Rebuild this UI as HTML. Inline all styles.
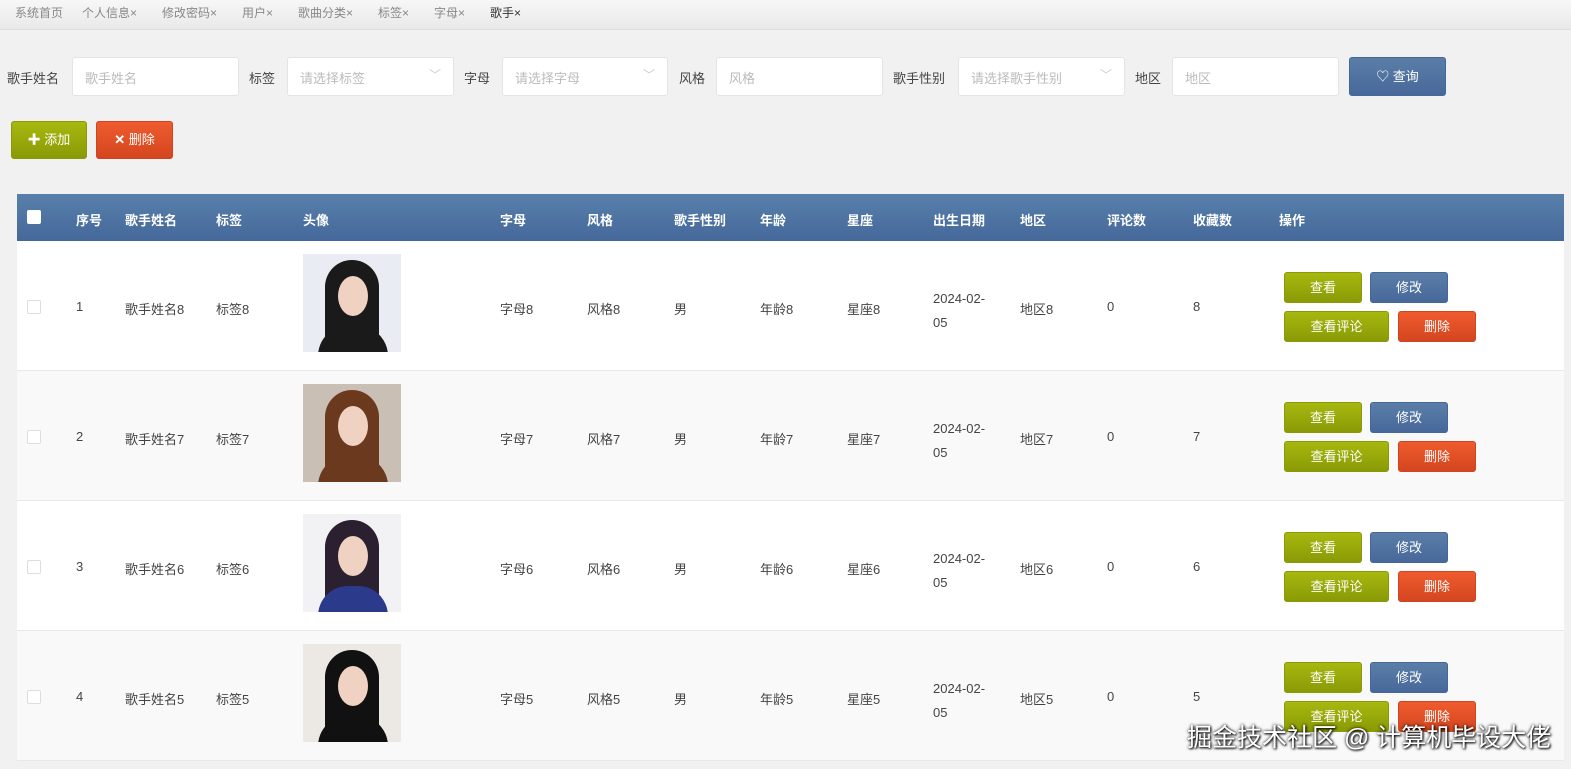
<!DOCTYPE html>
<html><head><meta charset="utf-8"><style>
*{margin:0;padding:0;box-sizing:border-box}
body{width:1571px;height:769px;background:#f1f1f1;font-family:"Liberation Sans","Noto Sans CJK SC",sans-serif;font-size:13px;color:#333;position:relative;overflow:hidden}
.a{position:absolute;white-space:nowrap}
.tabs{position:absolute;left:0;top:0;width:1571px;height:30px;background:linear-gradient(#f7f7f7,#e9e9e9);border-bottom:1px solid #ddd}
.tab{position:absolute;top:4px;font-size:12px;color:#888}
.inp{position:absolute;top:57px;height:39px;background:#fff;border:1px solid #e4e4e4;border-radius:3px;color:#bbb;font-size:13px;padding:10px 12px}
.inp .ch{position:absolute;right:12px;top:8px;color:#ccc;font-size:12px}
.lbl{position:absolute;top:68px;color:#444;font-size:13px}
.btn{position:absolute;color:#fff;text-align:center;border-radius:3px;font-size:13px}
.g{background:linear-gradient(#a7b80f,#8a9a06);border:1px solid #8a9a06}
.b{background:linear-gradient(#5b7ea8,#47689a);border:1px solid #45679a}
.r{background:linear-gradient(#ef5b2e,#d4461f);border:1px solid #cf4520}
.head{position:absolute;left:17px;top:194px;width:1547px;height:47px;background:linear-gradient(#5880ab,#45689a)}
.head span{position:absolute;top:16px;color:#fff;font-weight:bold;font-size:13px}
.row{position:absolute;left:17px;width:1547px;height:130px;border-bottom:1px solid #e8e8e8}
.row span{position:absolute;font-size:13px;color:#444}
.cb{position:absolute;left:10px;width:14px;height:14px;border:1px solid #ddd;background:#fff;border-radius:2px}
.img{position:absolute;left:286px;width:98px;height:98px;overflow:hidden}
</style></head><body>
<div class="tabs">
<span class="tab" style="left:15px">系统首页</span>
<span class="tab" style="left:82px">个人信息×</span>
<span class="tab" style="left:162px">修改密码×</span>
<span class="tab" style="left:242px">用户×</span>
<span class="tab" style="left:298px">歌曲分类×</span>
<span class="tab" style="left:378px">标签×</span>
<span class="tab" style="left:434px">字母×</span>
<span class="tab" style="left:490px;color:#333">歌手×</span>
</div>
<span class="lbl" style="left:7px">歌手姓名</span>
<div class="inp" style="left:72px;width:167px">歌手姓名</div>
<span class="lbl" style="left:249px">标签</span>
<div class="inp" style="left:287px;width:167px">请选择标签<span class="ch">﹀</span></div>
<span class="lbl" style="left:464px">字母</span>
<div class="inp" style="left:502px;width:166px">请选择字母<span class="ch">﹀</span></div>
<span class="lbl" style="left:679px">风格</span>
<div class="inp" style="left:716px;width:167px">风格</div>
<span class="lbl" style="left:893px">歌手性别</span>
<div class="inp" style="left:958px;width:167px">请选择歌手性别<span class="ch">﹀</span></div>
<span class="lbl" style="left:1135px">地区</span>
<div class="inp" style="left:1172px;width:167px">地区</div>
<div class="btn b" style="left:1349px;top:57px;width:97px;height:39px;line-height:37px">♡ 查询</div>
<div class="btn g" style="left:11px;top:121px;width:76px;height:38px;line-height:36px"><b>✚</b> 添加</div>
<div class="btn r" style="left:96px;top:121px;width:77px;height:38px;line-height:36px"><b>✕</b> 删除</div>

<div class="head">
<div class="cb" style="top:16px;border-color:#fff"></div>
<span style="left:59px">序号</span><span style="left:108px">歌手姓名</span><span style="left:199px">标签</span><span style="left:286px">头像</span><span style="left:483px">字母</span><span style="left:570px">风格</span><span style="left:657px">歌手性别</span><span style="left:743px">年龄</span><span style="left:830px">星座</span><span style="left:916px">出生日期</span><span style="left:1003px">地区</span><span style="left:1090px">评论数</span><span style="left:1176px">收藏数</span><span style="left:1262px">操作</span>
</div>

<div id="rows"></div>
<script>
var data=[[1,8,8,"#e9ecf2","#1a1a1a"],[2,7,7,"#c9bfb5","#6b3a1e"],[3,6,6,"#f2f2f4","#2a2030"],[4,5,5,"#ece8e4","#111"]];
var h="";
data.forEach(function(d,i){
var top=241+i*130;var bg=i%2?"#f9f9f9":"#fff";
h+='<div class="row" style="top:'+top+'px;background:'+bg+'">'+
'<div class="cb" style="top:59px"></div>'+
'<span style="left:59px;top:58px">'+d[0]+'</span>'+
'<span style="left:108px;top:58px">歌手姓名'+d[1]+'</span>'+
'<span style="left:199px;top:58px">标签'+d[1]+'</span>'+
'<div class="img" style="top:13px;background:'+d[3]+'"><div style="position:absolute;left:22px;top:6px;width:54px;height:92px;border-radius:27px 27px 10px 10px;background:'+d[4]+'"></div><div style="position:absolute;left:35px;top:22px;width:30px;height:40px;border-radius:50%;background:#f0d2c2"></div><div style="position:absolute;left:15px;top:72px;width:70px;height:30px;border-radius:30px 30px 0 0;background:'+(i==2?'#2b3a8a':d[4])+'"></div></div>'+
'<span style="left:483px;top:58px">字母'+d[1]+'</span>'+
'<span style="left:570px;top:58px">风格'+d[1]+'</span>'+
'<span style="left:657px;top:58px">男</span>'+
'<span style="left:743px;top:58px">年龄'+d[1]+'</span>'+
'<span style="left:830px;top:58px">星座'+d[1]+'</span>'+
'<span style="left:916px;top:46px;line-height:24px">2024-02-<br>05</span>'+
'<span style="left:1003px;top:58px">地区'+d[1]+'</span>'+
'<span style="left:1090px;top:58px">0</span>'+
'<span style="left:1176px;top:58px">'+d[2]+'</span>'+
'<div class="btn g" style="left:1267px;top:31px;width:78px;height:31px;line-height:29px">查看</div>'+
'<div class="btn b" style="left:1353px;top:31px;width:78px;height:31px;line-height:29px">修改</div>'+
'<div class="btn g" style="left:1267px;top:70px;width:105px;height:31px;line-height:29px">查看评论</div>'+
'<div class="btn r" style="left:1381px;top:70px;width:78px;height:31px;line-height:29px">删除</div>'+
'</div>';});
document.getElementById("rows").innerHTML=h;
</script>
<div class="a" style="left:1187px;top:718px;font-size:25px;color:#fff;text-shadow:0 0 3px #000,1px 1px 2px #000">掘金技术社区 @ 计算机毕设大佬</div>
</body></html>
